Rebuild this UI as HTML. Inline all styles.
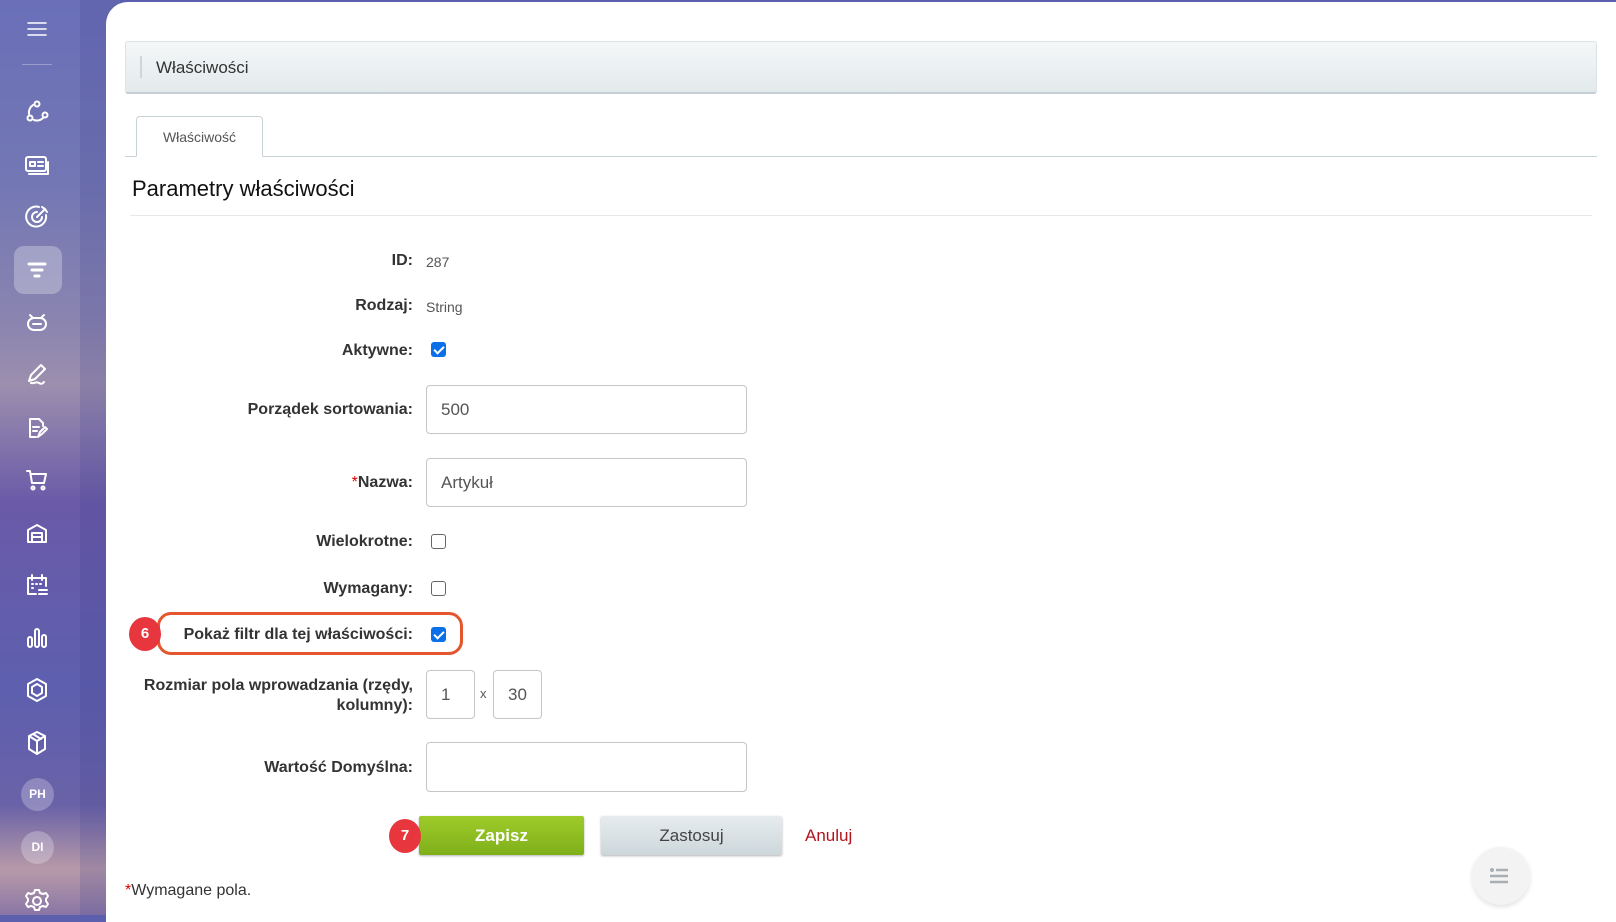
<!DOCTYPE html>
<html><head><meta charset="utf-8"><style>
*{box-sizing:border-box;margin:0;padding:0}
body{width:1616px;height:915px;overflow:hidden;position:relative;font-family:"Liberation Sans",sans-serif;background:#5b5fae}
.side{position:absolute;left:0;top:0;width:120px;height:915px;background:linear-gradient(180deg,#6a6fb8 0%,#7377b4 20%,#8a84b0 35%,#9c8fae 42%,#6a5aa8 55%,#5d5fae 75%,#6a62a8 88%,#b79aa8 95%,#8a76a6 100%)}
.side .strip{position:absolute;left:80px;top:0;width:40px;height:915px;background:rgba(60,60,140,.18)}
.ic{position:absolute;left:22px;width:30px;height:30px}
.ic svg{width:30px;height:30px;fill:none;stroke:#fff;stroke-width:2;stroke-linecap:round;stroke-linejoin:round}
.av{position:absolute;left:21px;width:33px;height:33px;border-radius:50%;background:rgba(255,255,255,.25);color:#fff;font-size:12px;font-weight:bold;text-align:center;line-height:33px}
.main{position:absolute;left:106px;top:2px;width:1520px;height:920px;background:#fff;border-radius:22px 0 0 0}
.title{position:absolute;left:125px;top:41px;width:1472px;height:53px;background:linear-gradient(#f4f7f8,#e3eaec);border:1px solid #dde4e6;border-bottom:2px solid #c5ced2;border-radius:3px;font-size:17px;color:#333;line-height:52px;padding-left:30px}
.title:before{content:"";position:absolute;left:14px;top:14px;width:2px;height:22px;background:#cfd6d9}
.tabline{position:absolute;left:125px;top:156px;width:1472px;height:1px;background:#c8d2d6}
.tab{position:absolute;left:136px;top:116px;width:127px;height:41px;border:1px solid #c8d2d6;border-bottom:1px solid #fff;border-radius:4px 4px 0 0;background:#fff;font-size:14px;color:#555;text-align:center;line-height:40px}
.h{position:absolute;left:132px;top:176px;font-size:22px;color:#111}
.hr{position:absolute;left:130px;top:215px;width:1462px;height:1px;background:#e6e9ea}
.lb{position:absolute;right:1203px;font-size:16px;font-weight:bold;color:#333;text-align:right;white-space:nowrap}
.v{position:absolute;left:426px;font-size:14px;color:#555}
.in{position:absolute;border:1px solid #c5c5c5;border-radius:4px;background:#fff;font-size:17px;color:#555;padding-left:14px;display:flex;align-items:center}
.cb{position:absolute;left:431px;width:15px;height:15px;border-radius:3px}
.cb.on{background:#0b6fe8}
.cb.on:after{content:"";position:absolute;left:5px;top:2px;width:4px;height:8px;border:solid #fff;border-width:0 2px 2px 0;transform:rotate(45deg)}
.cb.off{border:1.5px solid #666;background:#fff}
.badge{position:absolute;width:32px;height:34px;border-radius:50%;background:#e8363e;color:#fff;font-weight:bold;font-size:15px;text-align:center;line-height:34px}
.btn{position:absolute;top:816px;height:39px;border-radius:2px;font-size:17px;text-align:center;line-height:39px}
</style></head><body>
<div class="side"><div class="strip"></div>
<div class="ic" style="top:14px"><svg viewBox="0 0 30 30"><path d="M6 9h18M6 15h18M6 21h18" stroke-width="1.6"/></svg></div>
<div style="position:absolute;left:22px;top:64px;width:30px;height:1px;background:rgba(255,255,255,.3)"></div>
<div class="ic" style="top:97px"><svg viewBox="0 0 30 30"><circle cx="15" cy="7" r="2.5"/><circle cx="8" cy="21" r="2.5"/><circle cx="23" cy="18" r="2.5"/><path d="M11 8a9 9 0 0 0-4 9M12 23a9 9 0 0 0 9-2"/></svg></div>
<div class="ic" style="top:150px"><svg viewBox="0 0 30 30"><rect x="4" y="7" width="20" height="14" rx="2"/><path d="M7 24h19V12M8 12h5v4H8zM16 12h5M16 16h5"/></svg></div>
<div class="ic" style="top:202px"><svg viewBox="0 0 30 30"><path d="M24 13a10 10 0 1 1-7-8"/><path d="M20 15a5 5 0 1 1-5-5"/><path d="M15 15l8-8M20 5l3 2 2 3"/></svg></div>
<div style="position:absolute;left:14px;top:246px;width:48px;height:48px;border-radius:10px;background:rgba(255,255,255,.28)"></div>
<div class="ic" style="top:255px"><svg viewBox="0 0 30 30"><path d="M7 9h16M10 15h10M13 21h4" stroke-width="3"/></svg></div>
<div class="ic" style="top:308px"><svg viewBox="0 0 30 30"><rect x="6" y="10" width="18" height="12" rx="6"/><path d="M8 7l3 3M22 7l-3 3M11 16h8"/></svg></div>
<div class="ic" style="top:360px"><svg viewBox="0 0 30 30"><path d="M7 21l2-6 10-10 4 4-10 10zM9 23c3 1 5-2 8 0s4 0 5-1"/></svg></div>
<div class="ic" style="top:413px"><svg viewBox="0 0 30 30"><path d="M14 24H8V6h9l4 4v3M11 14h6M11 18h4M16 24l2-5 5-5 2 2-5 5z"/></svg></div>
<div class="ic" style="top:465px"><svg viewBox="0 0 30 30"><path d="M5 6h3l2 12h12l2-9H9"/><circle cx="11" cy="23" r="1.5"/><circle cx="21" cy="23" r="1.5"/></svg></div>
<div class="ic" style="top:518px"><svg viewBox="0 0 30 30"><path d="M6 24V12l9-5 9 5v12zM10 24V15h10v9M10 19h10"/></svg></div>
<div class="ic" style="top:570px"><svg viewBox="0 0 30 30"><path d="M14 24H6V8h18v8M10 5v5M20 5v5M10 14h1M14 14h1M18 14h1M10 18h1M17 20h8M17 24h8"/></svg></div>
<div class="ic" style="top:623px"><svg viewBox="0 0 30 30"><rect x="6" y="14" width="4" height="10" rx="2"/><rect x="13" y="6" width="4" height="18" rx="2"/><rect x="20" y="12" width="4" height="12" rx="2"/></svg></div>
<div class="ic" style="top:675px"><svg viewBox="0 0 30 30"><path d="M15 4l9 5v12l-9 5-9-5V9z"/><path d="M15 9l5 3v6l-5 3-5-3v-6z"/></svg></div>
<div class="ic" style="top:728px"><svg viewBox="0 0 30 30"><path d="M15 4l8 4v13l-8 5-8-5V8zM7 8l8 5 8-5M15 13v13M11 6l8 5"/></svg></div>
<div class="av" style="top:778px">PH</div>
<div class="av" style="top:831px">DI</div>
<div class="ic" style="top:886px"><svg viewBox="0 0 30 30"><circle cx="15" cy="15" r="4"/><path d="M13 4h4l1 3 3 1 3-1 2 3-2 3v2l2 3-2 3-3-1-3 1-1 3h-4l-1-3-3-1-3 1-2-3 2-3v-2l-2-3 2-3 3 1 3-1z"/></svg></div>
</div>
<div class="main"></div>
<div class="title">Właściwości</div>
<div class="tabline"></div>
<div class="tab">Właściwość</div>
<div class="h">Parametry właściwości</div>
<div class="hr"></div>

<div class="lb" style="top:252px">ID:</div><div class="v" style="top:254px">287</div>
<div class="lb" style="top:297px">Rodzaj:</div><div class="v" style="top:299px">String</div>
<div class="lb" style="top:342px">Aktywne:</div><div class="cb on" style="top:342px"></div>
<div class="lb" style="top:401px">Porządek sortowania:</div>
<div class="in" style="left:426px;top:385px;width:321px;height:49px">500</div>
<div class="lb" style="top:474px"><span style="color:#d00;font-weight:normal">*</span>Nazwa:</div>
<div class="in" style="left:426px;top:458px;width:321px;height:49px">Artykuł</div>
<div class="lb" style="top:533px">Wielokrotne:</div><div class="cb off" style="top:534px"></div>
<div class="lb" style="top:580px">Wymagany:</div><div class="cb off" style="top:581px"></div>
<div style="position:absolute;left:157px;top:612px;width:306px;height:43px;border:3px solid #e4572e;border-radius:14px"></div>
<div class="badge" style="left:129px;top:617px">6</div>
<div class="lb" style="top:626px">Pokaż filtr dla tej właściwości:</div><div class="cb on" style="top:627px"></div>
<div class="lb" style="top:676px;line-height:20px">Rozmiar pola wprowadzania (rzędy,<br>kolumny):</div>
<div class="in" style="left:426px;top:670px;width:49px;height:49px">1</div>
<div style="position:absolute;left:480px;top:686px;font-size:13px;color:#555">x</div>
<div class="in" style="left:493px;top:670px;width:49px;height:49px">30</div>
<div class="lb" style="top:759px">Wartość Domyślna:</div>
<div class="in" style="left:426px;top:742px;width:321px;height:50px"></div>
<div class="btn" style="left:419px;width:165px;background:linear-gradient(#9ecb2a,#7fb01a);color:#fff;font-weight:bold;box-shadow:0 1px 2px rgba(0,0,0,.3)">Zapisz</div>
<div class="badge" style="left:389px;top:819px">7</div>
<div class="btn" style="left:601px;width:181px;background:linear-gradient(#e6ecee,#cdd7db);color:#444;box-shadow:0 1px 2px rgba(0,0,0,.3)">Zastosuj</div>
<div style="position:absolute;left:805px;top:826px;font-size:17px;color:#b3141c">Anuluj</div>
<div style="position:absolute;left:125px;top:882px;font-size:16px;color:#333"><span style="color:#d00">*</span>Wymagane pola.</div>
<div style="position:absolute;left:1472px;top:847px;width:58px;height:58px;border-radius:50%;background:#f3f3f4;box-shadow:0 2px 5px rgba(0,0,0,.12)">
<svg viewBox="0 0 58 58" width="58" height="58"><circle cx="20" cy="23" r="2" fill="#a9aeb5"/><path d="M24 23h12M18 29h18M18 35h18" stroke="#a9aeb5" stroke-width="2.5"/></svg></div>
</body></html>
